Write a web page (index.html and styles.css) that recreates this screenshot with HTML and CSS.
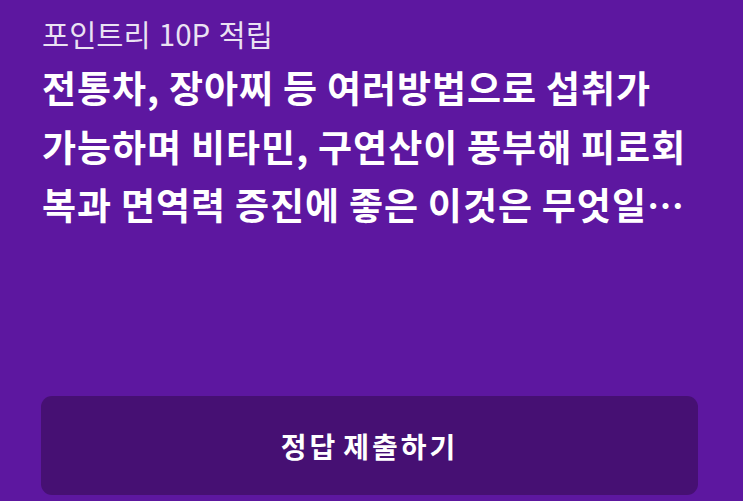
FILE: index.html
```html
<!DOCTYPE html>
<html lang="ko">
<head>
<meta charset="utf-8">
<link rel="stylesheet" href="styles.css">
</head>
<body>
<main class="card">
  <div class="content">
    <p class="reward">포인트리 10P 적립</p>
    <h1 class="question">전통차, 장아찌 등 여러방법으로 섭취가 가능하며 비타민, 구연산이 풍부해 피로회복과 면역력 증진에 좋은 이것은 무엇일까요? 정답을 입력하고 포인트리를 받아보세요.</h1>
  </div>
  <button class="submit" type="button">정답 제출하기</button>
</main>
</body>
</html>
```

FILE: styles.css
```css
html, body {
  margin: 0;
  padding: 0;
  height: 100%;
}
body {
  background: #5d17a0;
  font-family: "Noto Sans CJK KR", "Noto Sans", sans-serif;
  color: #fff;
}
.card {
  box-sizing: border-box;
  height: 100%;
  padding: 12px 45px 6px 42px;
  display: flex;
  flex-direction: column;
}
.content {
  flex: 1;
}
.reward {
  margin: 0;
  font-size: 29.5px;
  font-weight: 400;
  line-height: 42px;
  color: rgba(255, 255, 255, 0.88);
}
.question {
  margin: 4px 0 0;
  width: 650px;
  font-size: 37px;
  font-weight: 700;
  letter-spacing: 1px;
  word-spacing: -2.5px;
  line-height: 58.5px;
  display: -webkit-box;
  -webkit-box-orient: vertical;
  -webkit-line-clamp: 3;
  overflow: hidden;
  word-break: break-all;
}
.submit {
  margin: 0 0 0 -1px;
  height: 99px;
  width: 657px;
  border: none;
  border-radius: 11px;
  background: #461073;
  color: #fff;
  font-family: inherit;
  font-size: 28px;
  font-weight: 700;
  letter-spacing: 3px;
  word-spacing: -6px;
}
```
